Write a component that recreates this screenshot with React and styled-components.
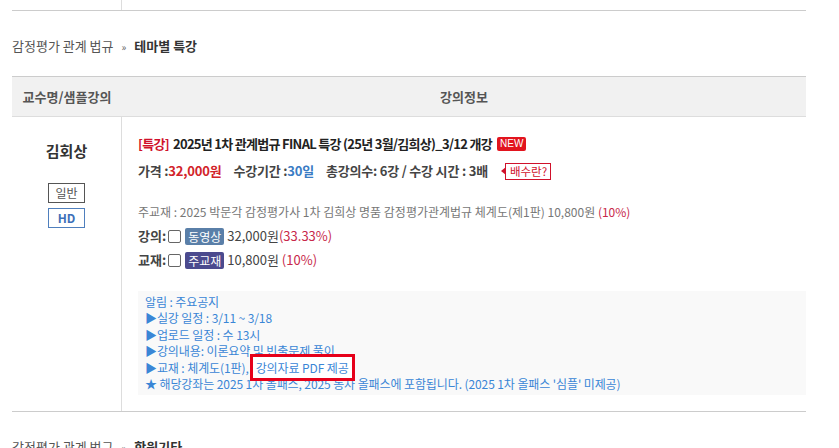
import React from 'react';
import styled, { createGlobalStyle } from 'styled-components';

const GlobalStyle = createGlobalStyle`
  body {
    margin: 0;
    background: #fff;
    font-family: "Noto Sans CJK KR", "Noto Sans", sans-serif;
    color: #333;
  }
`;

const Page = styled('div')`
  width: 794px;
  padding-left: 12px;
`;

const PrevTail = styled('div')`
  display: grid;
  grid-template-columns: 110px 1fr;
  height: 10px;
  border-bottom: 1px solid #ccc;
`;
const TailCell = styled('div')`
  border-right: 1px solid #ddd;
`;

const Breadcrumb = styled('div')`
  margin: 25px 0 19px;
  font-size: 13px;
  line-height: 20px;
  color: #555;
  span {
    font-size: 10px;
    margin: 0 8px;
    color: #666;
  }
  b {
    color: #333;
    font-weight: 700;
  }
`;

const Table = styled('div')`
  display: grid;
  grid-template-columns: 110px 1fr;
  border-top: 1px solid #ccc;
  border-bottom: 1px solid #ccc;
`;
const HeadCell = styled('div')`
  height: 39px;
  background: #f1f1f1;
  border-bottom: 1px solid #ddd;
  display: flex;
  align-items: center;
  justify-content: center;
  font-size: 13px;
  font-weight: 700;
  color: #555;
`;

const ProfCell = styled('div')`
  border-right: 1px solid #ddd;
  display: flex;
  flex-direction: column;
  align-items: center;
  padding-top: 24px;
`;
const ProfName = styled('div')`
  font-size: 15px;
  font-weight: 700;
  line-height: 20px;
  color: #333;
  margin-bottom: 22px;
`;
const SampleBtn = styled('div')`
  width: 35px;
  height: 18px;
  border: 1px solid ${(p) => (p.$hd ? '#4f7fbd' : '#555')};
  color: ${(p) => (p.$hd ? '#3d6fb8' : '#555')};
  font-weight: ${(p) => (p.$hd ? 700 : 400)};
  font-size: 12px;
  line-height: 18px;
  text-align: center;
  margin-bottom: 5px;
`;

const InfoCell = styled('div')`
  padding: 17px 0 16px 16px;
`;
const Title = styled('div')`
  display: flex;
  align-items: center;
  font-size: 13px;
  font-weight: 700;
  letter-spacing: -0.7px;
  line-height: 20px;
  color: #222;
  em {
    font-style: normal;
    color: #d0112b;
    margin-right: 4px;
  }
`;
const NewBadge = styled('span')`
  margin-left: 5px;
  background: #e2141e;
  color: #fff;
  font-family: "Liberation Sans", Arial, sans-serif;
  font-size: 10px;
  font-weight: 400;
  letter-spacing: 0;
  line-height: 14px;
  padding: 0 3px;
  border-radius: 2px;
`;
const PriceLine = styled('div')`
  display: flex;
  align-items: center;
  margin-top: 7px;
  font-size: 13px;
  font-weight: 700;
  letter-spacing: -0.2px;
  line-height: 20px;
  color: #444;
`;
const Item = styled('span')`
  margin-right: 12px;
`;
const Val = styled('span')`
  color: ${(p) => p.$color};
`;
const TipTag = styled('span')`
  position: relative;
  margin-left: 5px;
  border: 1px solid #d0112b;
  color: #d0112b;
  font-size: 11.5px;
  font-weight: 400;
  letter-spacing: 0;
  line-height: 15px;
  padding: 0 3px 0 4px;
  &::before {
    content: '';
    position: absolute;
    left: -5px;
    top: 3px;
    border-top: 4px solid transparent;
    border-bottom: 4px solid transparent;
    border-right: 5px solid #d0112b;
  }
`;

const BookLine = styled('div')`
  margin-top: 21px;
  font-size: 12px;
  line-height: 20px;
  color: #777;
`;
const Pct = styled('span')`
  color: #c8284a;
`;
const BuyLine = styled('div')`
  display: flex;
  align-items: center;
  margin-top: 4px;
  font-size: 13px;
  line-height: 20px;
  color: #444;
  b {
    font-weight: 700;
    margin-right: 2px;
  }
`;
const Check = styled('input')`
  appearance: none;
  width: 13px;
  height: 13px;
  margin: 0 4px 0 0;
  border: 1px solid #666;
  border-radius: 2px;
  background: #fff;
`;
const Badge = styled('span')`
  background: ${(p) => p.$bg};
  color: #fff;
  font-size: 12px;
  line-height: 17px;
  padding: 0 3px;
  margin-right: 3px;
  border-radius: 2px;
`;

const Notice = styled('div')`
  margin-top: 21px;
  background: #f9f9f9;
  padding: 3px 7px;
  font-size: 12px;
  letter-spacing: -0.1px;
  line-height: 16.4px;
  color: #3a86d6;
`;
const Mark = styled('span')`
  position: relative;
  border: 3px solid #e6001a;
  background: #fff;
  padding: 2px 3px;
  margin-left: 1px;
`;

export default function App() {
  return (
    <Page>
      <GlobalStyle />
      <PrevTail>
        <TailCell />
        <div />
      </PrevTail>

      <Breadcrumb>
        감정평가 관계 법규<span>»</span><b>테마별 특강</b>
      </Breadcrumb>

      <Table>
        <HeadCell>교수명/샘플강의</HeadCell>
        <HeadCell>강의정보</HeadCell>

        <ProfCell>
          <ProfName>김회상</ProfName>
          <SampleBtn>일반</SampleBtn>
          <SampleBtn $hd>HD</SampleBtn>
        </ProfCell>

        <InfoCell>
          <Title>
            <em>[특강]</em>2025년 1차 관계법규 FINAL 특강 (25년 3월/김희상)_3/12 개강
            <NewBadge>NEW</NewBadge>
          </Title>
          <PriceLine>
            <Item>
              가격 :<Val $color="#d2232a">32,000원</Val>
            </Item>
            <Item>
              수강기간 :<Val $color="#3a7cc4">30일</Val>
            </Item>
            <Item>총강의수: 6강 / 수강 시간 : 3배</Item>
            <TipTag>배수란?</TipTag>
          </PriceLine>

          <BookLine>
            주교재 : 2025 박문각 감정평가사 1차 김희상 명품 감정평가관계법규 체계도(제1판) 10,800원{' '}
            <Pct>(10%)</Pct>
          </BookLine>
          <BuyLine>
            <b>강의:</b>
            <Check type="checkbox" />
            <Badge $bg="#5a7fa8">동영상</Badge>
            32,000원<Pct>(33.33%)</Pct>
          </BuyLine>
          <BuyLine>
            <b>교재:</b>
            <Check type="checkbox" />
            <Badge $bg="#4b4a8e">주교재</Badge>
            10,800원&nbsp;<Pct>(10%)</Pct>
          </BuyLine>

          <Notice>
            <div>알림 : 주요공지</div>
            <div>▶실강 일정 : 3/11 ~ 3/18</div>
            <div>▶업로드 일정 : 수 13시</div>
            <div>▶강의내용: 이론요약 및 빈출문제 풀이</div>
            <div>
              ▶교재 : 체계도(1판),<Mark>강의자료 PDF 제공</Mark>
            </div>
            <div>★ 해당강좌는 2025 1차 올패스, 2025 동차 올패스에 포함됩니다. (2025 1차 올패스 '심플' 미제공)</div>
          </Notice>
        </InfoCell>
      </Table>

      <Breadcrumb>
        감정평가 관계 법규<span>»</span><b>학원기타</b>
      </Breadcrumb>
    </Page>
  );
}
